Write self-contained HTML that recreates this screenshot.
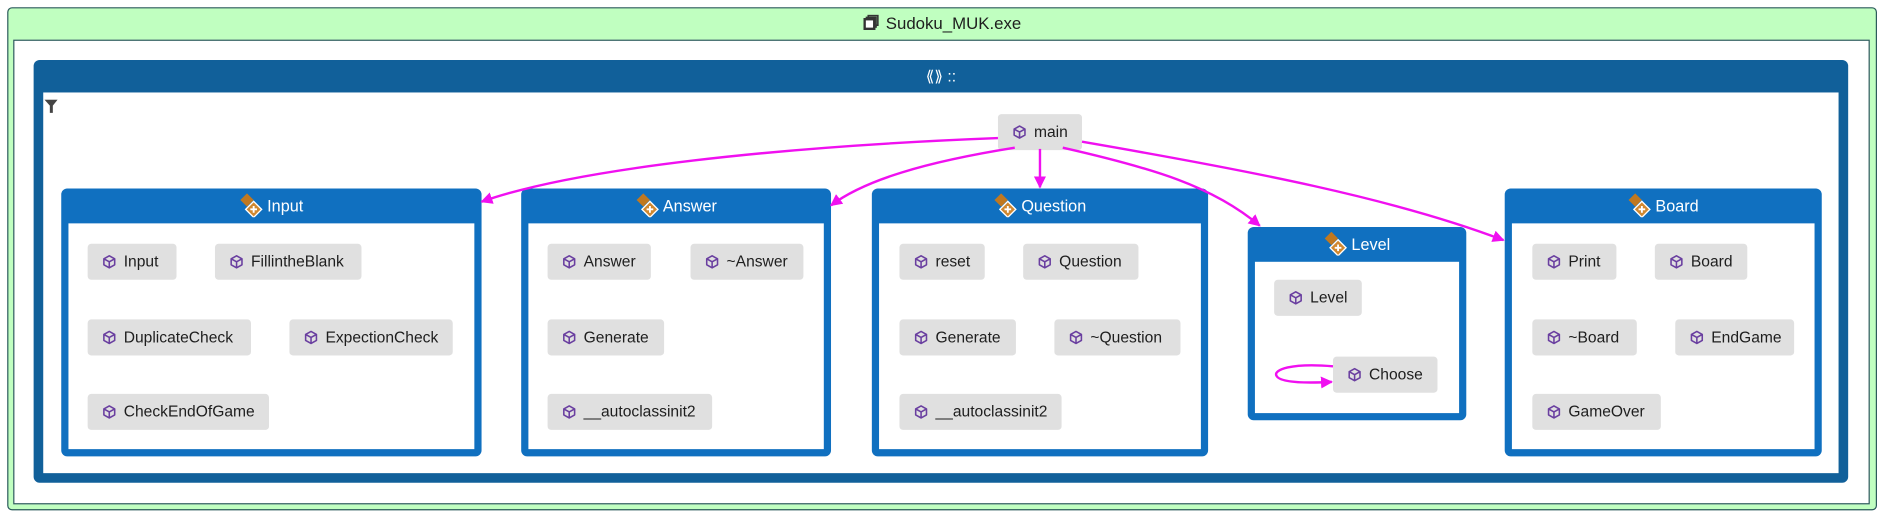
<!DOCTYPE html>
<html><head><meta charset="utf-8"><style>
html,body{margin:0;padding:0;background:#fff;width:1883px;height:518px;overflow:hidden}
#w{position:absolute;left:0;top:0;width:1568px;height:432px;transform:scale(1.20089);transform-origin:0 0;font-family:"Liberation Sans",sans-serif;font-size:13px;color:#1e1e1e}
.a{position:absolute;box-sizing:border-box}
.n{position:absolute;box-sizing:border-box;background:#e0e0e0;border-radius:3px;height:30px;line-height:30px;padding-left:12px;white-space:nowrap;font-size:13px}
.n svg{vertical-align:-2px;margin-right:6px}
.cls{position:absolute;box-sizing:border-box;background:#1070c0;border-radius:5px}
.cls .h{position:absolute;left:0;right:0;top:0;height:29px;line-height:29px;text-align:center;color:#fff;font-size:13.5px}
.cls .h svg{vertical-align:-5px;margin-right:3px}
.cls .b{position:absolute;left:6px;right:6px;top:29px;bottom:6px;background:#fff}
</style></head><body><div id="w">
<svg width="0" height="0" style="position:absolute"><defs>
<symbol id="cube" viewBox="0 0 12 12"><path d="M6 1 L10.5 3.5 V8.5 L6 11 L1.5 8.5 V3.5 Z M1.5 3.5 L6 6 L10.5 3.5 M6 6 V11" fill="none" stroke="#6a3fa0" stroke-width="1.3" stroke-linejoin="round"/></symbol>
<symbol id="clsi" viewBox="0 0 18 18"><path d="M6 0 L11 5 L6 10 L1 5 Z" fill="#c07820"/><path d="M11 6 L17 12 L11 18 L5 12 Z" fill="#d08830" stroke="#fff" stroke-width="1"/><path d="M8.5 12 h5 M11 9.5 v5" stroke="#fff" stroke-width="1.4"/></symbol>
</defs></svg>
<div class="a" style="left:6px;top:6px;width:1557px;height:419px;background:#c0ffc0;border:1px solid #2a5a5a;border-radius:4px"></div>
<div class="a" style="left:6px;top:6px;width:1557px;height:27px;text-align:center;line-height:27px;font-size:14px">
<svg width="13" height="13" viewBox="0 0 13 13" style="vertical-align:-1px;margin-right:6px"><rect x="4" y="1" width="8" height="8" fill="none" stroke="#333" stroke-width="1.3"/><rect x="2.5" y="2.5" width="8" height="8" fill="#fff" stroke="#333" stroke-width="1.3"/><rect x="1" y="4" width="8" height="8" fill="#fff" stroke="#333" stroke-width="2"/></svg>Sudoku_MUK.exe</div>
<div class="a" style="left:11px;top:33px;width:1546px;height:387px;background:#fff;border:1px solid #2a5a5a"></div>
<div class="a" style="left:28px;top:50px;width:1511px;height:352px;background:#11609a;border-radius:5px"></div>
<div class="a" style="left:28px;top:50px;width:1511px;height:27px;line-height:28px;text-align:center;color:#fff;font-size:13px">⟪⟫ ::</div>
<div class="a" style="left:36px;top:77px;width:1495px;height:317px;background:#fff"></div>
<svg class="a" style="left:37px;top:83px" width="12" height="12" viewBox="0 0 12 12"><path d="M0 0 H11 L7 5 V11 H4.5 V5 Z" fill="#444"/></svg>
<div class="cls" style="left:51px;top:157px;width:350px;height:223px"><div class="h"><svg width="20" height="20"><use href="#clsi"/></svg>Input</div><div class="b"></div></div>
<div class="n" style="left:73px;top:203px;width:74px"><svg width="12" height="12"><use href="#cube"/></svg>Input</div>
<div class="n" style="left:179px;top:203px;width:122px"><svg width="12" height="12"><use href="#cube"/></svg>FillintheBlank</div>
<div class="n" style="left:73px;top:266px;width:136px"><svg width="12" height="12"><use href="#cube"/></svg>DuplicateCheck</div>
<div class="n" style="left:241px;top:266px;width:136px"><svg width="12" height="12"><use href="#cube"/></svg>ExpectionCheck</div>
<div class="n" style="left:73px;top:328px;width:151px"><svg width="12" height="12"><use href="#cube"/></svg>CheckEndOfGame</div>
<div class="cls" style="left:434px;top:157px;width:258px;height:223px"><div class="h"><svg width="20" height="20"><use href="#clsi"/></svg>Answer</div><div class="b"></div></div>
<div class="n" style="left:456px;top:203px;width:86px"><svg width="12" height="12"><use href="#cube"/></svg>Answer</div>
<div class="n" style="left:575px;top:203px;width:94px"><svg width="12" height="12"><use href="#cube"/></svg>~Answer</div>
<div class="n" style="left:456px;top:266px;width:97px"><svg width="12" height="12"><use href="#cube"/></svg>Generate</div>
<div class="n" style="left:456px;top:328px;width:137px"><svg width="12" height="12"><use href="#cube"/></svg>__autoclassinit2</div>
<div class="cls" style="left:726px;top:157px;width:280px;height:223px"><div class="h"><svg width="20" height="20"><use href="#clsi"/></svg>Question</div><div class="b"></div></div>
<div class="n" style="left:749px;top:203px;width:71px"><svg width="12" height="12"><use href="#cube"/></svg>reset</div>
<div class="n" style="left:852px;top:203px;width:96px"><svg width="12" height="12"><use href="#cube"/></svg>Question</div>
<div class="n" style="left:749px;top:266px;width:97px"><svg width="12" height="12"><use href="#cube"/></svg>Generate</div>
<div class="n" style="left:878px;top:266px;width:105px"><svg width="12" height="12"><use href="#cube"/></svg>~Question</div>
<div class="n" style="left:749px;top:328px;width:135px"><svg width="12" height="12"><use href="#cube"/></svg>__autoclassinit2</div>
<div class="cls" style="left:1039px;top:189px;width:182px;height:161px"><div class="h"><svg width="20" height="20"><use href="#clsi"/></svg>Level</div><div class="b"></div></div>
<div class="n" style="left:1061px;top:233px;width:73px"><svg width="12" height="12"><use href="#cube"/></svg>Level</div>
<div class="n" style="left:1110px;top:297px;width:87px"><svg width="12" height="12"><use href="#cube"/></svg>Choose</div>
<div class="cls" style="left:1253px;top:157px;width:264px;height:223px"><div class="h"><svg width="20" height="20"><use href="#clsi"/></svg>Board</div><div class="b"></div></div>
<div class="n" style="left:1276px;top:203px;width:70px"><svg width="12" height="12"><use href="#cube"/></svg>Print</div>
<div class="n" style="left:1378px;top:203px;width:77px"><svg width="12" height="12"><use href="#cube"/></svg>Board</div>
<div class="n" style="left:1276px;top:266px;width:87px"><svg width="12" height="12"><use href="#cube"/></svg>~Board</div>
<div class="n" style="left:1395px;top:266px;width:99px"><svg width="12" height="12"><use href="#cube"/></svg>EndGame</div>
<div class="n" style="left:1276px;top:328px;width:107px"><svg width="12" height="12"><use href="#cube"/></svg>GameOver</div>
<div class="n" style="left:831px;top:95px;width:70px"><svg width="12" height="12"><use href="#cube"/></svg>main</div>
<svg class="a" style="left:0;top:0" width="1568" height="432">
<defs><marker id="ar" viewBox="0 0 10 10" refX="9" refY="5" markerWidth="5" markerHeight="5" orient="auto"><path d="M0 0 L10 5 L0 10 Z" fill="#f010f0"/></marker></defs>
<g fill="none" stroke="#f010f0" stroke-width="2" marker-end="url(#ar)">
<path d="M831 115 C650 122 480 140 401 168"/>
<path d="M845 123 C770 135 720 150 692 171"/>
<path d="M866 124 V156"/>
<path d="M885 123 C960 140 1010 155 1049 188"/>
<path d="M901 118 C1040 142 1160 165 1252 200"/>
<path d="M1110 305 C1075 302 1060 308 1063 313 C1066 319 1090 319 1109 318"/>
</g></svg>
</div></body></html>
